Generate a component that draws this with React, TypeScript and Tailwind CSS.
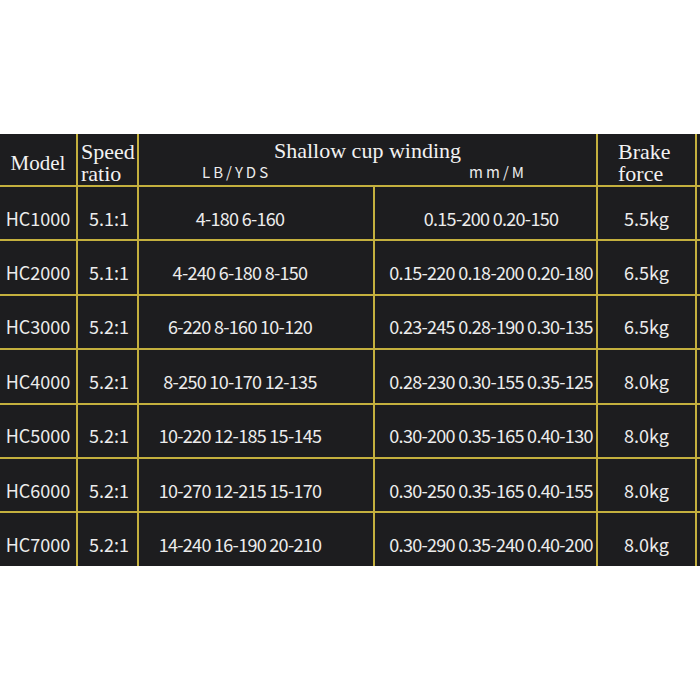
const rows = [
  { model: "HC1000", ratio: "5.1:1", lb: "4-180 6-160", mm: "0.15-200 0.20-150", brake: "5.5kg" },
  { model: "HC2000", ratio: "5.1:1", lb: "4-240 6-180 8-150", mm: "0.15-220 0.18-200 0.20-180", brake: "6.5kg" },
  { model: "HC3000", ratio: "5.2:1", lb: "6-220 8-160 10-120", mm: "0.23-245 0.28-190 0.30-135", brake: "6.5kg" },
  { model: "HC4000", ratio: "5.2:1", lb: "8-250 10-170 12-135", mm: "0.28-230 0.30-155 0.35-125", brake: "8.0kg" },
  { model: "HC5000", ratio: "5.2:1", lb: "10-220 12-185 15-145", mm: "0.30-200 0.35-165 0.40-130", brake: "8.0kg" },
  { model: "HC6000", ratio: "5.2:1", lb: "10-270 12-215 15-170", mm: "0.30-250 0.35-165 0.40-155", brake: "8.0kg" },
  { model: "HC7000", ratio: "5.2:1", lb: "14-240 16-190 20-210", mm: "0.30-290 0.35-240 0.40-200", brake: "8.0kg" },
];

const serif = "font-['Liberation_Serif',serif]";
const sans = "font-['Noto_Sans_CJK_SC','Noto_Sans',sans-serif]";
const cell = "bg-[#1d1d1f] flex items-center";
const bodyCell = `${cell} justify-center pt-[10px] text-[18px] text-[#ececec] whitespace-nowrap ${sans}`;
// range columns are set a bit tighter, as in the original sheet
const rangeCell = "text-[17.5px] tracking-[-0.7px]";

export default function App() {
  return (
    <div className="w-[700px] h-[700px] bg-white pt-[134px]">
      <div className="grid grid-cols-[76px_59px_234px_221px_97px_3px] grid-rows-[51px_repeat(7,52.4px)] gap-[2px] bg-[#c4b03e]">
        {/* header */}
        <div className={`${cell} justify-center pt-[7px] ${serif} text-[21px] leading-[22px] text-[#f2f2f2]`}>
          Model
        </div>
        <div className={`${cell} pl-[3px] pt-[7px] ${serif} text-[22px] leading-[22px] text-[#f2f2f2]`}>
          <div>
            Speed
            <br />
            ratio
          </div>
        </div>
        <div className="bg-[#1d1d1f] col-span-2 flex flex-col pt-[6px]">
          <div className={`${serif} text-[22px] leading-[22px] text-[#f2f2f2] text-center`}>
            Shallow cup winding
          </div>
          <div className={`flex mt-[2px] ${sans} text-[15px] leading-[16px] tracking-[3px] text-[#ececec]`}>
            <span className="ml-[63px]">LB/YDS</span>
            <span className="ml-[198px]">mm/M</span>
          </div>
        </div>
        <div className={`${cell} pl-5 pt-[7px] ${serif} text-[22px] leading-[22px] text-[#f2f2f2]`}>
          <div>
            Brake
            <br />
            force
          </div>
        </div>
        <div className="bg-[#1d1d1f]" />

        {/* body */}
        {rows.map((r) => (
          <div key={r.model} className="contents">
            <div className={bodyCell}>{r.model}</div>
            <div className={`${bodyCell} pl-[3px]`}>{r.ratio}</div>
            <div className={`${bodyCell} ${rangeCell} pr-8`}>{r.lb}</div>
            <div className={`${bodyCell} ${rangeCell} pl-[11px]`}>{r.mm}</div>
            <div className={bodyCell}>{r.brake}</div>
            <div className="bg-[#1d1d1f]" />
          </div>
        ))}
      </div>
    </div>
  );
}
